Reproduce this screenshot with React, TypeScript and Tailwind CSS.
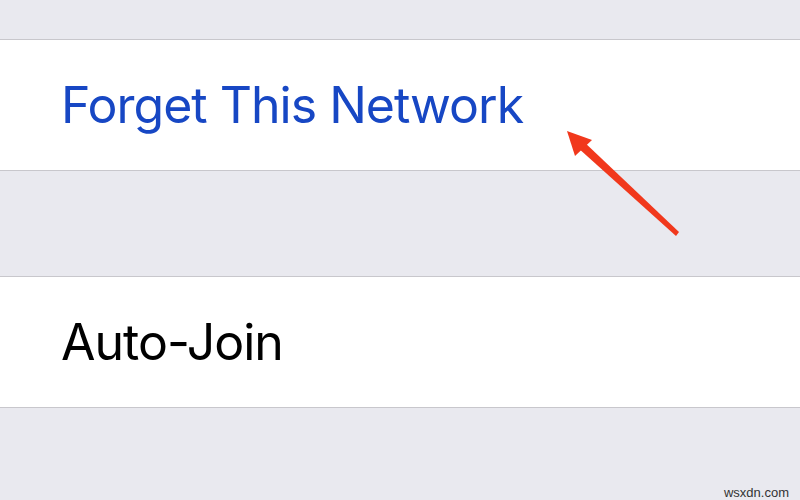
import React from 'react';

const Arrow = () => (
  <svg className="absolute left-0 top-0" width="800" height="500" viewBox="0 0 800 500">
    <polygon points="679,232 676,236 577,147 582,140" fill="#f1381c" />
    <polygon points="567,131 592,140 575,156" fill="#f1381c" />
  </svg>
);

const Row = ({ children, className }: { children: React.ReactNode; className: string }) => (
  <div className="h-[132px] bg-white border-y border-[#c8c7cc] flex items-center pl-[61px]">
    <span className={className}>{children}</span>
  </div>
);

export default function App() {
  return (
    <div className="relative w-[800px] h-[500px] overflow-hidden bg-[#e9e9ef] font-['Inter',sans-serif]">
      <div className="h-[39px]" />
      <Row className="text-[50px] leading-none text-[#1747c4] tracking-[-1px]">Forget This Network</Row>
      <div className="h-[105px]" />
      <Row className="text-[50px] leading-none text-black tracking-[-1px]">Auto-Join</Row>
      <div className="flex justify-end pr-[11px] pt-[75px]">
        <span className="text-[13px] text-[#333] font-['Liberation_Sans',sans-serif]">wsxdn.com</span>
      </div>
      <Arrow />
    </div>
  );
}
